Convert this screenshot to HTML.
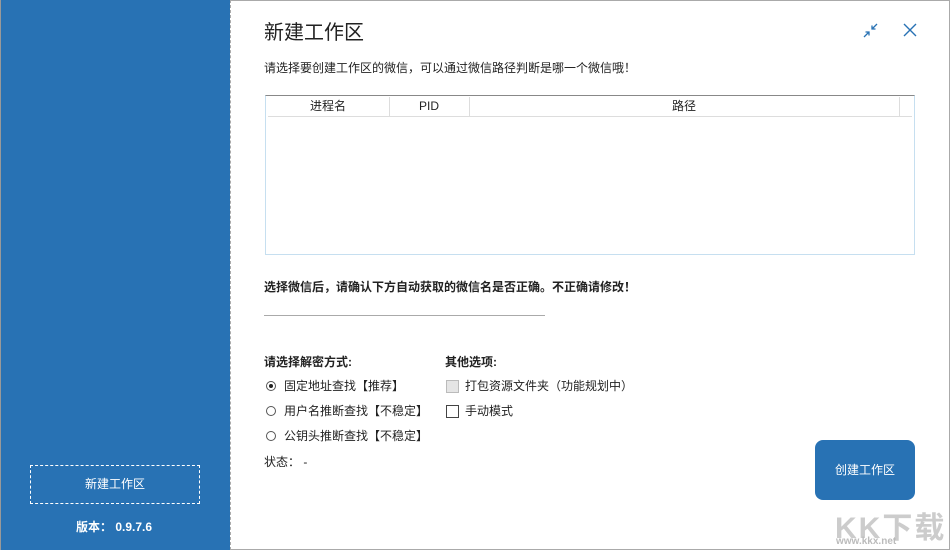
<!DOCTYPE html><html><head><meta charset="utf-8"><style>
body{margin:0;width:950px;height:550px;overflow:hidden;background:#fff;font-family:"Liberation Sans","Noto Sans CJK SC",sans-serif;color:#222;position:relative}
.a{position:absolute}
.side{left:0;top:0;width:230px;height:550px;background:#2872b4;border-left:1px solid #999;box-sizing:border-box}
.frame{left:230px;top:0;width:720px;height:550px;border:1px solid #aaa;border-left:1px dashed #aaa;box-sizing:border-box}
.t{font-size:12px;line-height:16px;white-space:nowrap}
.radio{width:10px;height:10px;border:1px solid #555;border-radius:50%;box-sizing:border-box}
.cb{width:13px;height:13px;border:1px solid #444;box-sizing:border-box}
</style></head><body>
<div class="a side"></div>
<div class="a frame"></div>
<div class="a" style="left:30px;top:465px;width:170px;height:39px;border:1px dashed #fff;box-sizing:border-box;color:#fff;font-size:12px;text-align:center;line-height:37px">新建工作区</div>
<div class="a t" style="left:76px;top:519px;color:#fff;font-weight:bold">版本： 0.9.7.6</div>
<div class="a" style="left:264px;top:20px;font-size:20px;line-height:26px;color:#222">新建工作区</div>
<svg class="a" style="left:862px;top:22px" width="18" height="18" viewBox="0 0 18 18" fill="none" stroke="#2872b4" stroke-width="1.3"><path d="M2 15L7 10M3.5 10H7V13.5M15 2L10 7M10 3.5V7H13.5"/></svg>
<svg class="a" style="left:903px;top:23px" width="14" height="14" viewBox="0 0 14 14" stroke="#2872b4" stroke-width="1.4"><path d="M1 1L13 13M13 1L1 13"/></svg>
<div class="a t" style="left:264px;top:60px">请选择要创建工作区的微信，可以通过微信路径判断是哪一个微信哦！</div>
<div class="a" style="left:265px;top:95px;width:650px;height:160px;border:1px solid #c6dff0;border-top:1px solid #888;box-sizing:border-box"></div>
<div class="a" style="left:268px;top:97px;width:644px;height:19px;border-bottom:1px solid #ddd;background:#fff"></div>
<div class="a" style="left:389px;top:97px;width:1px;height:19px;background:#ddd"></div>
<div class="a" style="left:469px;top:97px;width:1px;height:19px;background:#ddd"></div>
<div class="a" style="left:899px;top:97px;width:1px;height:19px;background:#ddd"></div>
<div class="a t" style="left:310px;top:98px">进程名</div>
<div class="a t" style="left:419px;top:98px">PID</div>
<div class="a t" style="left:672px;top:98px">路径</div>
<div class="a t" style="left:264px;top:279px;font-weight:bold">选择微信后，请确认下方自动获取的微信名是否正确。不正确请修改！</div>
<div class="a" style="left:264px;top:315px;width:281px;height:1px;background:#aaa"></div>
<div class="a t" style="left:264px;top:354px;font-weight:bold">请选择解密方式:</div>
<div class="a t" style="left:445px;top:354px;font-weight:bold">其他选项:</div>
<div class="a radio" style="left:266px;top:381px"></div><div class="a" style="left:269px;top:384px;width:4px;height:4px;border-radius:50%;background:#222"></div>
<div class="a radio" style="left:266px;top:406px"></div>
<div class="a radio" style="left:266px;top:431px"></div>
<div class="a t" style="left:284px;top:378px">固定地址查找【推荐】</div>
<div class="a t" style="left:284px;top:403px">用户名推断查找【不稳定】</div>
<div class="a t" style="left:284px;top:428px">公钥头推断查找【不稳定】</div>
<div class="a cb" style="left:446px;top:380px;background:#e5e5e5;border-color:#bbb"></div>
<div class="a cb" style="left:446px;top:405px"></div>
<div class="a t" style="left:465px;top:378px">打包资源文件夹（功能规划中）</div>
<div class="a t" style="left:465px;top:403px">手动模式</div>
<div class="a t" style="left:264px;top:454px">状态： -</div>
<div class="a" style="left:815px;top:440px;width:100px;height:60px;background:#2872b4;border-radius:8px;color:#fff;font-size:12px;text-align:center;line-height:60px">创建工作区</div>
<div class="a" style="left:835px;top:503px;font-size:30px;font-weight:bold;color:#ccc;letter-spacing:2px">KK下载</div>
<div class="a" style="left:836px;top:536px;font-size:10px;font-weight:bold;color:#bbb">www.kkx.net</div>
</body></html>
